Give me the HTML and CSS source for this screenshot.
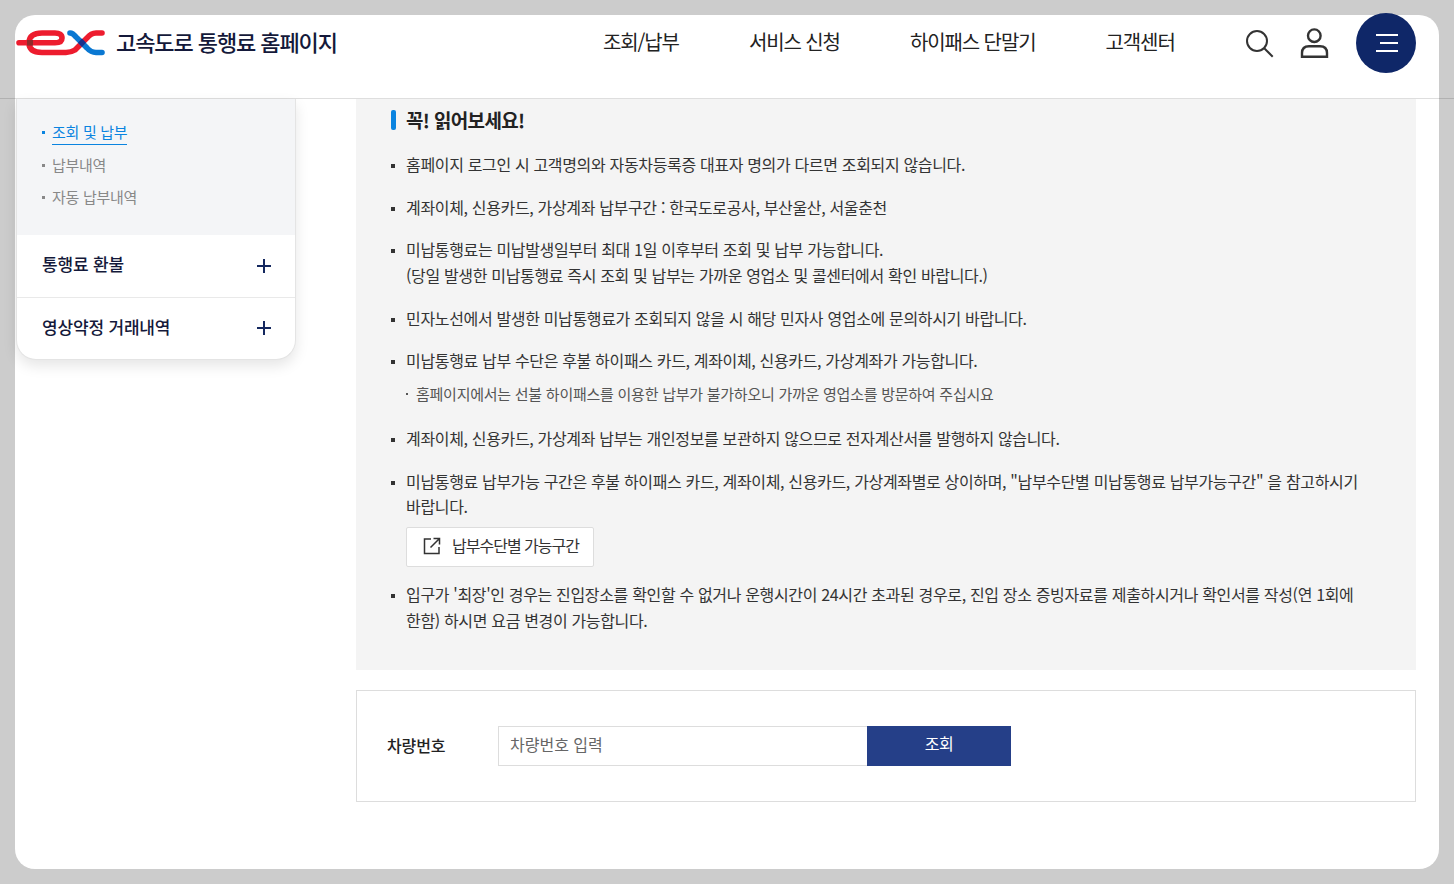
FILE: index.html
```html
<!DOCTYPE html>
<html lang="ko">
<head>
<meta charset="utf-8">
<title>고속도로 통행료 홈페이지</title>
<link rel="stylesheet" href="styles.css">
</head>
<body>
<div class="shell">
  <header class="header">
    <a class="brand">
      <svg class="logo" width="92" height="30" viewBox="0 0 92 30" fill="none">
        <path d="M4 15.800H40Q47 15.800 47 11Q47 6 40 6H27Q14 6 14 15.800Q14 25.500 27 25.500H51Q56 25.500 60 23L72 11Q76 6 81 6H87" stroke="#ed1c2e" stroke-width="5.600" stroke-linecap="round"/>
        <path d="M55 6Q58 6 61 10L72 21Q76 25.500 81 25.500H87" stroke="#0a78d2" stroke-width="5.600" stroke-linecap="round"/>
        <rect x="12" y="13" width="6" height="5.600" fill="#8f2a2a"/>
        <path d="M67 11.500L71 15.800L67 20L63 15.800Z" fill="#1b2f8a"/>
      </svg>
      <span class="brand-name">고속도로 통행료 홈페이지</span>
    </a>
    <nav class="nav">
      <a>조회/납부</a>
      <a>서비스 신청</a>
      <a>하이패스 단말기</a>
      <a>고객센터</a>
    </nav>
    <div class="tools">
      <svg class="tool-search" width="30" height="30" viewBox="0 0 30 30" fill="none" stroke="#333" stroke-width="2">
        <circle cx="13" cy="12" r="10"/>
        <path d="M20 19L28.700 27.700"/>
      </svg>
      <svg class="tool-user" width="30" height="32" viewBox="0 0 30 32" fill="none" stroke="#333" stroke-width="2.400">
        <circle cx="15.300" cy="8.700" r="6.300"/>
        <path d="M3 29.800V26Q3 19.200 10 19.200H21Q28 19.200 28 26V29.800Z"/>
      </svg>
      <button class="menu-btn" aria-label="메뉴"><i></i><i class="short"></i><i></i></button>
    </div>
  </header>

  <main class="main">
    <aside class="side">
      <ul class="side-sub">
        <li class="on"><a>조회 및 납부</a></li>
        <li><a>납부내역</a></li>
        <li><a>자동 납부내역</a></li>
      </ul>
      <div class="side-item"><span>통행료 환불</span><b class="plus"></b></div>
      <div class="side-item last"><span>영상약정 거래내역</span><b class="plus"></b></div>
    </aside>

    <section class="content">
      <div class="notice">
        <h3 class="notice-title">꼭! 읽어보세요!</h3>
        <ul class="notice-list">
          <li>홈페이지 로그인 시 고객명의와 자동차등록증 대표자 명의가 다르면 조회되지 않습니다.</li>
          <li>계좌이체, 신용카드, 가상계좌 납부구간 : 한국도로공사, 부산울산, 서울춘천</li>
          <li>미납통행료는 미납발생일부터 최대 1일 이후부터 조회 및 납부 가능합니다.<br>(당일 발생한 미납통행료 즉시 조회 및 납부는 가까운 영업소 및 콜센터에서 확인 바랍니다.)</li>
          <li>민자노선에서 발생한 미납통행료가 조회되지 않을 시 해당 민자사 영업소에 문의하시기 바랍니다.</li>
          <li>미납통행료 납부 수단은 후불 하이패스 카드, 계좌이체, 신용카드, 가상계좌가 가능합니다.
            <p class="sub-note">홈페이지에서는 선불 하이패스를 이용한 납부가 불가하오니 가까운 영업소를 방문하여 주십시요</p>
          </li>
          <li>계좌이체, 신용카드, 가상계좌 납부는 개인정보를 보관하지 않으므로 전자계산서를 발행하지 않습니다.</li>
          <li>미납통행료 납부가능 구간은 후불 하이패스 카드, 계좌이체, 신용카드, 가상계좌별로 상이하며, "납부수단별 미납통행료 납부가능구간" 을 참고하시기 바랍니다.
            <a class="link-btn">
              <svg width="18" height="18" viewBox="0 0 18 18" fill="none" stroke="#333" stroke-width="1.500">
                <path d="M8 2H1.500V16.500H16V10"/>
                <path d="M7.500 10.500L16 2M10.500 1.500H16.500V7.500"/>
              </svg>
              납부수단별 가능구간
            </a>
          </li>
          <li>입구가 '최장'인 경우는 진입장소를 확인할 수 없거나 운행시간이 24시간 초과된 경우로, 진입 장소 증빙자료를 제출하시거나 확인서를 작성(연 1회에 한함) 하시면 요금 변경이 가능합니다.</li>
        </ul>
      </div>
      <form class="search">
        <label class="search-label" for="car">차량번호</label>
        <input class="search-input" id="car" type="text" placeholder="차량번호 입력">
        <button class="search-btn" type="button">조회</button>
      </form>
    </section>
  </main>
</div>
</body>
</html>
```
FILE: styles.css
```css
* { box-sizing: border-box; }
html, body { margin: 0; height: 100%; }
body {
  background: #ccc;
  padding: 15px;
  font-family: "Noto Sans CJK KR", "Noto Sans", sans-serif;
  color: #222;
  overflow: hidden;
}
a { color: inherit; text-decoration: none; }
ul { list-style: none; margin: 0; padding: 0; }

.shell {
  background: #fff;
  border-radius: 20px;
  height: 854px;
}

.header {
  display: flex;
  align-items: flex-start;
  height: 84px;
  margin: 0 -15px;
  padding: 0 38px 0 15px;
  border-bottom: 1px solid rgba(0, 0, 0, .13);
}
.brand { display: flex; align-items: center; margin-top: 12px; height: 30px; }
.logo { display: block; }
.brand-name {
  margin: -2px 0 0 9px;
  font-size: 22px;
  font-weight: 500;
  letter-spacing: -1.08px;
  color: #14193a;
  white-space: nowrap;
}
.nav {
  display: flex;
  gap: 70px;
  margin-left: 266px;
  margin-top: 12px;
  font-size: 20px;
  line-height: 30px;
  letter-spacing: -1.1px;
  color: #222;
  white-space: nowrap;
}
.tools { display: flex; align-items: flex-start; margin-left: auto; }
.tool-search { margin-top: 14px; }
.tool-user { margin: 12px 0 0 25px; }
.menu-btn {
  width: 60px;
  height: 60px;
  margin: -2px 0 0 27px;
  border: 0;
  padding: 0 18px 0 0;
  border-radius: 50%;
  background: #0f2768;
  display: flex;
  flex-direction: column;
  align-items: flex-end;
  justify-content: center;
  gap: 6px;
}
.menu-btn i { display: block; width: 22px; height: 2px; background: #fff; }
.menu-btn i.short { width: 18px; }

.main { display: flex; align-items: flex-start; padding: 0 23px 0 1px; }

.side {
  width: 280px;
  background: #fff;
  border: 1px solid #e4e4e4;
  border-top: 0;
  border-radius: 0 0 20px 20px;
  box-shadow: 0 6px 14px rgba(0, 0, 0, .1);
  overflow: hidden;
}
.side-sub {
  background: #f4f5f7;
  height: 136px;
  padding: 17px 0 0 25px;
  font-size: 15px;
  letter-spacing: -0.3px;
  color: #888;
}
.side-sub li { position: relative; height: 32.500px; line-height: 32px; padding-left: 10px; }
.side-sub li::before {
  content: "";
  position: absolute;
  left: 0;
  top: 15px;
  width: 3px;
  height: 3px;
  background: #888;
}
.side-sub li.on { color: #0a84e0; }
.side-sub li.on::before { background: #0a84e0; }
.side-sub li.on a { display: inline-block; line-height: 25px; border-bottom: 1px solid #0a84e0; }
.side-item {
  display: flex;
  justify-content: space-between;
  align-items: center;
  height: 63px;
  padding: 0 24px 5px 25px;
  border-bottom: 1px solid #e9e9e9;
  font-size: 17px;
  font-weight: 500;
  letter-spacing: -0.18px;
  color: #14193a;
}
.side-item.last { border-bottom: 0; height: 61px; padding-bottom: 5px; }
.plus { position: relative; display: block; width: 14px; height: 14px; margin-top: 5px; }
.side-item.last .plus { margin-top: 3px; }
.plus::before, .plus::after { content: ""; position: absolute; background: #14285f; }
.plus::before { left: 0; right: 0; top: 6px; height: 2px; }
.plus::after { top: 0; bottom: 0; left: 6px; width: 2px; }

.content { width: 1060px; margin-left: 60px; }
.notice {
  background: #f4f4f4;
  height: 571px;
  padding: 9px 56px 0 35px;
}
.notice-title {
  position: relative;
  margin: 0;
  padding-left: 15px;
  font-size: 19px;
  line-height: 24px;
  font-weight: 700;
  letter-spacing: -0.65px;
  color: #222;
}
.notice-title::before {
  content: "";
  position: absolute;
  left: 0;
  top: 2px;
  width: 5px;
  height: 20px;
  border-radius: 2px;
  background: #0a84e0;
}
.notice-list {
  margin-top: 20px;
  padding-left: 15px;
  font-size: 16px;
  line-height: 25.500px;
  letter-spacing: -0.34px;
  word-break: keep-all;
  color: #333;
}
.notice-list li { position: relative; margin-bottom: 17.200px; }
.notice-list li::before {
  content: "";
  position: absolute;
  left: -15px;
  top: 12px;
  width: 4px;
  height: 4px;
  background: #333;
}
.sub-note {
  position: relative;
  margin: 7.500px 0 19.500px;
  padding-left: 10px;
  font-size: 15px;
  letter-spacing: -0.25px;
  color: #555;
}
.sub-note::before {
  content: "";
  position: absolute;
  left: 0;
  top: 12px;
  width: 2px;
  height: 2px;
  background: #555;
}
.link-btn {
  display: flex;
  align-items: center;
  gap: 11px;
  width: 188px;
  height: 40px;
  margin: 7px 0 -2px;
  padding: 0 0 2px 16px;
  background: #fff;
  border: 1px solid #ddd;
  border-radius: 2px;
  font-size: 16px;
  letter-spacing: -1px;
  color: #333;
}
.search {
  display: flex;
  align-items: center;
  height: 112px;
  margin-top: 20px;
  padding-left: 30px;
  border: 1px solid #ddd;
}
.search-label {
  width: 111px;
  margin-top: -3px;
  font-size: 16px;
  font-weight: 500;
  letter-spacing: -0.1px;
  color: #222;
}
.search-input {
  width: 369px;
  height: 40px;
  padding: 0 11px 4px;
  border: 1px solid #ddd;
  border-right: 0;
  outline: 0;
  font: inherit;
  font-size: 16px;
  letter-spacing: 0;
  color: #333;
}
.search-input::placeholder { color: #666; opacity: 1; }
.search-btn {
  width: 144px;
  height: 40px;
  border: 0;
  background: #253f88;
  color: #fff;
  font: inherit;
  font-size: 16px;
  letter-spacing: -0.5px;
  padding: 0 0 7px;
}
```
